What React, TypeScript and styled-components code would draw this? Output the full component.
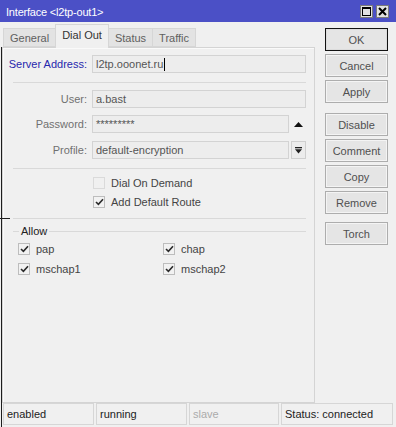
import React from "react";
import styled, { createGlobalStyle } from "styled-components";

const Global = createGlobalStyle`
  html, body { margin: 0; padding: 0; background: #f0f0f0; }
  body { font-family: "Liberation Sans", Arial, sans-serif; font-size: 11px; }
`;

const Window = styled.div`
  position: relative;
  width: 396px;
  height: 427px;
  display: flex;
  flex-direction: column;
  background: #f0f0f0;
  overflow: hidden;
  color: #333;
`;

const TitleBar = styled.div`
  height: 22px;
  flex: none;
  box-sizing: border-box;
  background: #4b50c6;
  display: flex;
  align-items: center;
  padding: 1px 7px 0 6px;
  color: #fff;
  font-size: 11px;
`;

const Title = styled.span`
  flex: 1;
  letter-spacing: -0.2px;
`;

const TitleButtons = styled.div`
  display: flex;
  gap: 3px;
`;

const TitleButton = styled.div`
  width: 13px;
  height: 13px;
  box-sizing: border-box;
  background: #e2e2e2;
  border: 1px solid #7a7a7a;
  display: flex;
  align-items: center;
  justify-content: center;
`;

const Main = styled.div`
  flex: 1;
  display: flex;
  min-height: 0;
`;

const LeftCol = styled.div`
  width: 315px;
  box-sizing: border-box;
  padding-left: 2px;
  display: flex;
  flex-direction: column;
`;

const TabBar = styled.div`
  height: 26px;
  flex: none;
  display: flex;
  align-items: flex-end;
  padding-left: 1px;
  margin-bottom: -1px;
  position: relative;
  z-index: 1;
`;

const Tab = styled.div<{ $active?: boolean }>`
  box-sizing: border-box;
  padding: 0 6px ${(p) => (p.$active ? 3 : 0)}px;
  height: ${(p) => (p.$active ? 24 : 19)}px;
  margin-bottom: ${(p) => (p.$active ? 0 : 1)}px;
  display: flex;
  align-items: center;
  border: 1px solid #d6d6d6;
  border-bottom: ${(p) => (p.$active ? "none" : "1px solid #d6d6d6")};
  background: ${(p) => (p.$active ? "#f0f0f0" : "#e3e3e3")};
  color: ${(p) => (p.$active ? "#333" : "#606060")};
  font-size: 11px;
  & + & {
    margin-left: -1px;
  }
`;

const Panel = styled.div`
  flex: 1;
  box-sizing: border-box;
  border: 1px solid #d4d4d4;
  box-shadow: inset 1px 1px 0 #fafafa;
  padding: 7px 8px 0 0;
  display: flex;
  flex-direction: column;
`;

const FieldRow = styled.div<{ $top?: number }>`
  display: grid;
  grid-template-columns: 84px 1fr;
  column-gap: 5px;
  align-items: center;
  height: 18px;
  margin-top: ${(p) => p.$top ?? 0}px;
`;

const Label = styled.div<{ $accent?: boolean }>`
  text-align: right;
  white-space: nowrap;
  color: ${(p) => (p.$accent ? "#2727ad" : "#707070")};
`;

const FieldCell = styled.div`
  display: flex;
  align-items: center;
  gap: 2px;
  height: 18px;
`;

const Input = styled.div`
  flex: 1;
  height: 18px;
  box-sizing: border-box;
  border: 1px solid #d3d3d3;
  background: #ededed;
  padding: 0 3px;
  display: flex;
  align-items: center;
  color: #555;
  white-space: nowrap;
`;

const Caret = styled.span`
  display: inline-block;
  width: 1px;
  height: 13px;
  background: #000;
  margin-left: 1px;
`;

const SideSlot = styled.div<{ $boxed?: boolean }>`
  width: 15px;
  height: 18px;
  box-sizing: border-box;
  display: flex;
  align-items: center;
  justify-content: center;
  border: ${(p) => (p.$boxed ? "1px solid #cfcfcf" : "none")};
  background: ${(p) => (p.$boxed ? "#ececec" : "transparent")};
`;

const Divider = styled.div<{ $top: number }>`
  height: 0;
  border-top: 1px solid #d9d9d9;
  margin: ${(p) => p.$top}px 0 0 10px;
`;

const CheckRow = styled.div<{ $top?: number; $indent: number }>`
  display: flex;
  align-items: center;
  height: 18px;
  margin-top: ${(p) => p.$top ?? 0}px;
  padding-left: ${(p) => p.$indent}px;
`;

const CheckItem = styled.div<{ $width?: number }>`
  display: flex;
  align-items: center;
  gap: 6px;
  width: ${(p) => (p.$width ? `${p.$width}px` : "auto")};
  color: #444;
`;

const Box = styled.div<{ $checked?: boolean }>`
  width: 12px;
  height: 12px;
  box-sizing: border-box;
  border: 1px solid ${(p) => (p.$checked ? "#bdbdbd" : "#dadada")};
  background: ${(p) => (p.$checked ? "#f2f2f2" : "#f0f0f0")};
  display: flex;
  align-items: center;
  justify-content: center;
`;

const GroupHeader = styled.div`
  display: flex;
  align-items: center;
  height: 14px;
  margin: 5px 0 0 10px;
  gap: 2px;
  color: #222;
  &::before {
    content: "";
    width: 6px;
    border-top: 1px solid #d9d9d9;
  }
  &::after {
    content: "";
    flex: 1;
    border-top: 1px solid #d9d9d9;
  }
`;

const ButtonCol = styled.div`
  flex: 1;
  display: flex;
  flex-direction: column;
  padding: 6px 0 0 10px;
`;

const Button = styled.div<{ $default?: boolean; $top?: number }>`
  width: 63px;
  height: 23px;
  box-sizing: border-box;
  margin-top: ${(p) => p.$top ?? 3}px;
  border: 1px solid ${(p) => (p.$default ? "#111" : "#adadad")};
  box-shadow: inset 0 0 0 1px ${(p) => (p.$default ? "#dcdcdc" : "#f4f4f4")};
  background: #e5e5e5;
  color: #505050;
  display: flex;
  align-items: center;
  justify-content: center;
  &:first-child {
    margin-top: 0;
  }
`;

const StatusBar = styled.div`
  height: 24px;
  flex: none;
  box-sizing: border-box;
  padding: 0 3px 2px 3px;
  display: grid;
  grid-template-columns: 91px 91px 90px 1fr;
  column-gap: 2px;
`;

const StatusCell = styled.div<{ $dim?: boolean }>`
  box-sizing: border-box;
  border: 1px solid #d6d6d6;
  padding-left: 3px;
  display: flex;
  align-items: center;
  color: ${(p) => (p.$dim ? "#ababab" : "#222")};
`;

const EdgeLine = styled.div`
  position: absolute;
  left: 1px;
  top: 47px;
  bottom: 0;
  width: 1px;
  background: #1e1e1e;
  &::after {
    content: "";
    position: absolute;
    left: -1px;
    top: 171px;
    width: 10px;
    height: 1px;
    background: #1e1e1e;
  }
`;

const Check = () => (
  <svg width="9" height="8" viewBox="0 0 9 8">
    <path d="M1 4 L3.4 6.4 L8 1.2" stroke="#2b2b2b" strokeWidth="1.6" fill="none" />
  </svg>
);

const CheckBox: React.FC<{ checked?: boolean; label: string; width?: number }> = ({ checked, label, width }) => (
  <CheckItem $width={width}>
    <Box $checked={checked}>{checked && <Check />}</Box>
    <span>{label}</span>
  </CheckItem>
);

export default function App() {
  return (
    <>
      <Global />
      <Window>
        <TitleBar>
          <Title>Interface &lt;l2tp-out1&gt;</Title>
          <TitleButtons>
            <TitleButton>
              <svg width="9" height="9" viewBox="0 0 9 9">
                <rect x="0.5" y="0.5" width="8" height="8" fill="none" stroke="#000" />
                <rect x="0" y="0" width="9" height="2" fill="#000" />
              </svg>
            </TitleButton>
            <TitleButton>
              <svg width="9" height="9" viewBox="0 0 9 9">
                <path d="M1 1 L8 8 M8 1 L1 8" stroke="#000" strokeWidth="2" />
              </svg>
            </TitleButton>
          </TitleButtons>
        </TitleBar>
        <Main>
          <LeftCol>
            <TabBar>
              <Tab>General</Tab>
              <Tab $active>Dial Out</Tab>
              <Tab>Status</Tab>
              <Tab>Traffic</Tab>
            </TabBar>
            <Panel>
              <FieldRow>
                <Label $accent>Server Address:</Label>
                <FieldCell>
                  <Input>
                    l2tp.ooonet.ru
                    <Caret />
                  </Input>
                </FieldCell>
              </FieldRow>
              <Divider $top={9} />
              <FieldRow $top={7}>
                <Label>User:</Label>
                <FieldCell>
                  <Input>a.bast</Input>
                </FieldCell>
              </FieldRow>
              <FieldRow $top={7}>
                <Label>Password:</Label>
                <FieldCell>
                  <Input>*********</Input>
                  <SideSlot>
                    <svg width="9" height="5" viewBox="0 0 9 5">
                      <polygon points="0,5 9,5 4.5,0" fill="#111" />
                    </svg>
                  </SideSlot>
                </FieldCell>
              </FieldRow>
              <FieldRow $top={8}>
                <Label>Profile:</Label>
                <FieldCell>
                  <Input>default-encryption</Input>
                  <SideSlot $boxed>
                    <svg width="7" height="7" viewBox="0 0 7 7">
                      <rect x="0" y="0" width="7" height="1.3" fill="#222" />
                      <polygon points="0,2.3 7,2.3 3.5,6.5" fill="#222" />
                    </svg>
                  </SideSlot>
                </FieldCell>
              </FieldRow>
              <Divider $top={9} />
              <CheckRow $top={5} $indent={90}>
                <CheckBox label="Dial On Demand" />
              </CheckRow>
              <CheckRow $top={1} $indent={90}>
                <CheckBox checked label="Add Default Route" />
              </CheckRow>
              <Divider $top={7} />
              <GroupHeader>Allow</GroupHeader>
              <CheckRow $top={2} $indent={15}>
                <CheckBox checked label="pap" width={145} />
                <CheckBox checked label="chap" />
              </CheckRow>
              <CheckRow $top={2} $indent={15}>
                <CheckBox checked label="mschap1" width={145} />
                <CheckBox checked label="mschap2" />
              </CheckRow>
            </Panel>
          </LeftCol>
          <ButtonCol>
            <Button $default>OK</Button>
            <Button>Cancel</Button>
            <Button>Apply</Button>
            <Button $top={10}>Disable</Button>
            <Button>Comment</Button>
            <Button>Copy</Button>
            <Button>Remove</Button>
            <Button $top={8}>Torch</Button>
          </ButtonCol>
        </Main>
        <StatusBar>
          <StatusCell>enabled</StatusCell>
          <StatusCell>running</StatusCell>
          <StatusCell $dim>slave</StatusCell>
          <StatusCell>Status: connected</StatusCell>
        </StatusBar>
        <EdgeLine />
      </Window>
    </>
  );
}
